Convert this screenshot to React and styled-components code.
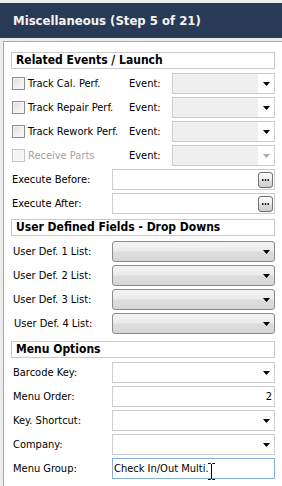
import React from 'react';
import styled, { createGlobalStyle } from 'styled-components';

const Global = createGlobalStyle`
  html, body { margin: 0; padding: 0; background: #ececec; }
  body { font-family: "DejaVu Sans Condensed", "DejaVu Sans", sans-serif; }
`;

const Window = styled.div`
  width: 282px;
  height: 486px;
  overflow: hidden;
  background: #ececec;
  padding-top: 3px;
  box-sizing: border-box;
  display: flex;
  flex-direction: column;
`;

const Header = styled.div`
  height: 35px;
  flex: none;
  background: #283a55;
  color: #f4f4f4;
  font-weight: bold;
  font-size: 13px;
  display: flex;
  align-items: center;
  padding-left: 13px;
  margin-bottom: 3px;
`;

const Panel = styled.div`
  flex: 1;
  margin-left: 3px;
  background: #fff;
  border-top: 1px solid #a8a8a8;
  border-left: 1px solid #a8a8a8;
  padding: 10px 7px 0 7px;
  display: flex;
  flex-direction: column;
`;

const SectionTitle = styled.div`
  height: 17px;
  box-sizing: border-box;
  border: 1px solid #c9c9c9;
  font-weight: bold;
  font-size: 12px;
  line-height: 15px;
  padding-left: 4px;
  color: #000;
  margin-top: ${p => p.$mt || 0}px;
  margin-bottom: ${p => p.$mb || 4}px;
`;

const Row = styled.div`
  display: flex;
  align-items: center;
  height: 21px;
  margin-bottom: 3px;
  font-size: 11px;
  color: ${p => (p.$disabled ? '#a3a3a3' : '#000')};
`;

const CheckLabel = styled.label`
  width: 117px;
  flex: none;
  display: flex;
  align-items: center;
  gap: 3px;
  padding-left: 1px;
  box-sizing: border-box;
`;

const Box = styled.span`
  width: 13px;
  height: 13px;
  box-sizing: border-box;
  border: 1px solid ${p => (p.$disabled ? '#c4c4c4' : '#8e8f8f')};
  background: ${p =>
    p.$disabled
      ? '#f4f4f4'
      : 'linear-gradient(135deg, #dcdcdc 0%, #f2f2f2 60%, #fafafa 100%)'};
  box-shadow: inset 0 0 0 1px ${p => (p.$disabled ? '#f8f8f8' : '#f4f4f4')};
`;

const EventLabel = styled.span`
  width: 43px;
  flex: none;
  padding-left: 1px;
  color: #000;
`;

const FieldLabel = styled.span`
  width: 101px;
  flex: none;
  padding-left: ${p => p.$pl ?? 1}px;
  box-sizing: border-box;
`;

const Combo = styled.div`
  flex: 1;
  align-self: stretch;
  box-sizing: border-box;
  display: flex;
  border: 1px solid ${p => (p.$kind === 'rounded' ? '#8a8a8a' : '#cdcdcd')};
  border-radius: ${p => (p.$kind === 'rounded' ? 3 : 0)}px;
  background: ${p =>
    p.$kind === 'rounded'
      ? 'linear-gradient(#f3f3f3 0%, #ebebeb 45%, #dddddd 55%, #d6d6d6 100%)'
      : p.$kind === 'event'
      ? '#efefef'
      : '#fff'};
  overflow: hidden;
  margin-top: ${p => (p.$kind === 'rounded' ? 0 : 0)}px;
`;

const ComboField = styled.div`
  flex: 1;
`;

const ComboButton = styled.div`
  width: 16px;
  flex: none;
  display: flex;
  align-items: center;
  justify-content: center;
  background: ${p => (p.$kind === 'event' ? '#fff' : 'transparent')};
`;

const TextBox = styled.div`
  position: relative;
  flex: 1;
  align-self: stretch;
  box-sizing: border-box;
  border: 1px solid ${p => (p.$focused ? '#86b0dc' : '#cdcdcd')};
  background: #fff;
  display: flex;
  align-items: center;
  justify-content: ${p => (p.$right ? 'flex-end' : 'space-between')};
  padding: 0 ${p => (p.$right ? 2 : 1)}px 0 1px;
  font-size: 11px;
  color: #000;
`;

const Ellipsis = styled.div`
  width: 15px;
  height: 16px;
  box-sizing: border-box;
  margin-left: auto;
  border: 1px solid #707070;
  border-radius: 3px;
  background: linear-gradient(#fbfbfb 0%, #eeeeee 50%, #dddddd 51%, #cfcfcf 100%);
  display: flex;
  align-items: center;
  justify-content: center;
`;

const Cursor = styled.svg`
  position: absolute;
  left: 95px;
  top: 4px;
`;

const Arrow = ({ disabled }) => (
  <svg width="7" height="4" viewBox="0 0 7 4">
    <path d="M0 0H7L3.5 4Z" fill={disabled ? '#a9a9a9' : '#000'} />
  </svg>
);

const Dots = () => (
  <svg width="7" height="2" viewBox="0 0 7 2">
    <rect x="0" y="0" width="1.5" height="2" fill="#222" />
    <rect x="2.75" y="0" width="1.5" height="2" fill="#222" />
    <rect x="5.5" y="0" width="1.5" height="2" fill="#222" />
  </svg>
);

const Dropdown = ({ kind, disabled }) => (
  <Combo $kind={kind}>
    <ComboField />
    <ComboButton $kind={kind}>
      <Arrow disabled={disabled} />
    </ComboButton>
  </Combo>
);

const trackRows = [
  { label: 'Track Cal. Perf.' },
  { label: 'Track Repair Perf.' },
  { label: 'Track Rework Perf.' },
  { label: 'Receive Parts', disabled: true },
];

export default function App() {
  return (
    <>
      <Global />
      <Window>
        <Header>Miscellaneous (Step 5 of 21)</Header>
        <Panel>
          <SectionTitle $mb={4}>Related Events / Launch</SectionTitle>
          {trackRows.map(r => (
            <Row key={r.label} $disabled={r.disabled}>
              <CheckLabel>
                <Box $disabled={r.disabled} />
                {r.label}
              </CheckLabel>
              <EventLabel>Event:</EventLabel>
              <Dropdown kind="event" disabled={r.disabled} />
            </Row>
          ))}
          {['Execute Before:', 'Execute After:'].map(l => (
            <Row key={l}>
              <FieldLabel>{l}</FieldLabel>
              <TextBox>
                <Ellipsis>
                  <Dots />
                </Ellipsis>
              </TextBox>
            </Row>
          ))}
          <SectionTitle $mt={2} $mb={5}>User Defined Fields - Drop Downs</SectionTitle>
          {[1, 2, 3, 4].map(n => (
            <Row key={n}>
              <FieldLabel $pl={n === 4 ? 3 : 2}>User Def. {n} List:</FieldLabel>
              <Dropdown kind="rounded" />
            </Row>
          ))}
          <SectionTitle $mt={4} $mb={4}>Menu Options</SectionTitle>
          <Row>
            <FieldLabel $pl={2}>Barcode Key:</FieldLabel>
            <Dropdown kind="flat" />
          </Row>
          <Row>
            <FieldLabel $pl={2}>Menu Order:</FieldLabel>
            <TextBox $right>2</TextBox>
          </Row>
          <Row>
            <FieldLabel $pl={2}>Key. Shortcut:</FieldLabel>
            <Dropdown kind="flat" />
          </Row>
          <Row>
            <FieldLabel $pl={2}>Company:</FieldLabel>
            <Dropdown kind="flat" />
          </Row>
          <Row>
            <FieldLabel $pl={2}>Menu Group:</FieldLabel>
            <TextBox $focused>
              Check In/Out Multi.
              <Cursor width="7" height="17" viewBox="0 0 7 17">
                <path
                  d="M0 0.5H2.5L3.5 1.5L4.5 0.5H7M3.5 1.5V15.5M0 16.5H2.5L3.5 15.5L4.5 16.5H7"
                  stroke="#000"
                  strokeWidth="1"
                  fill="none"
                />
              </Cursor>
            </TextBox>
          </Row>
        </Panel>
      </Window>
    </>
  );
}
